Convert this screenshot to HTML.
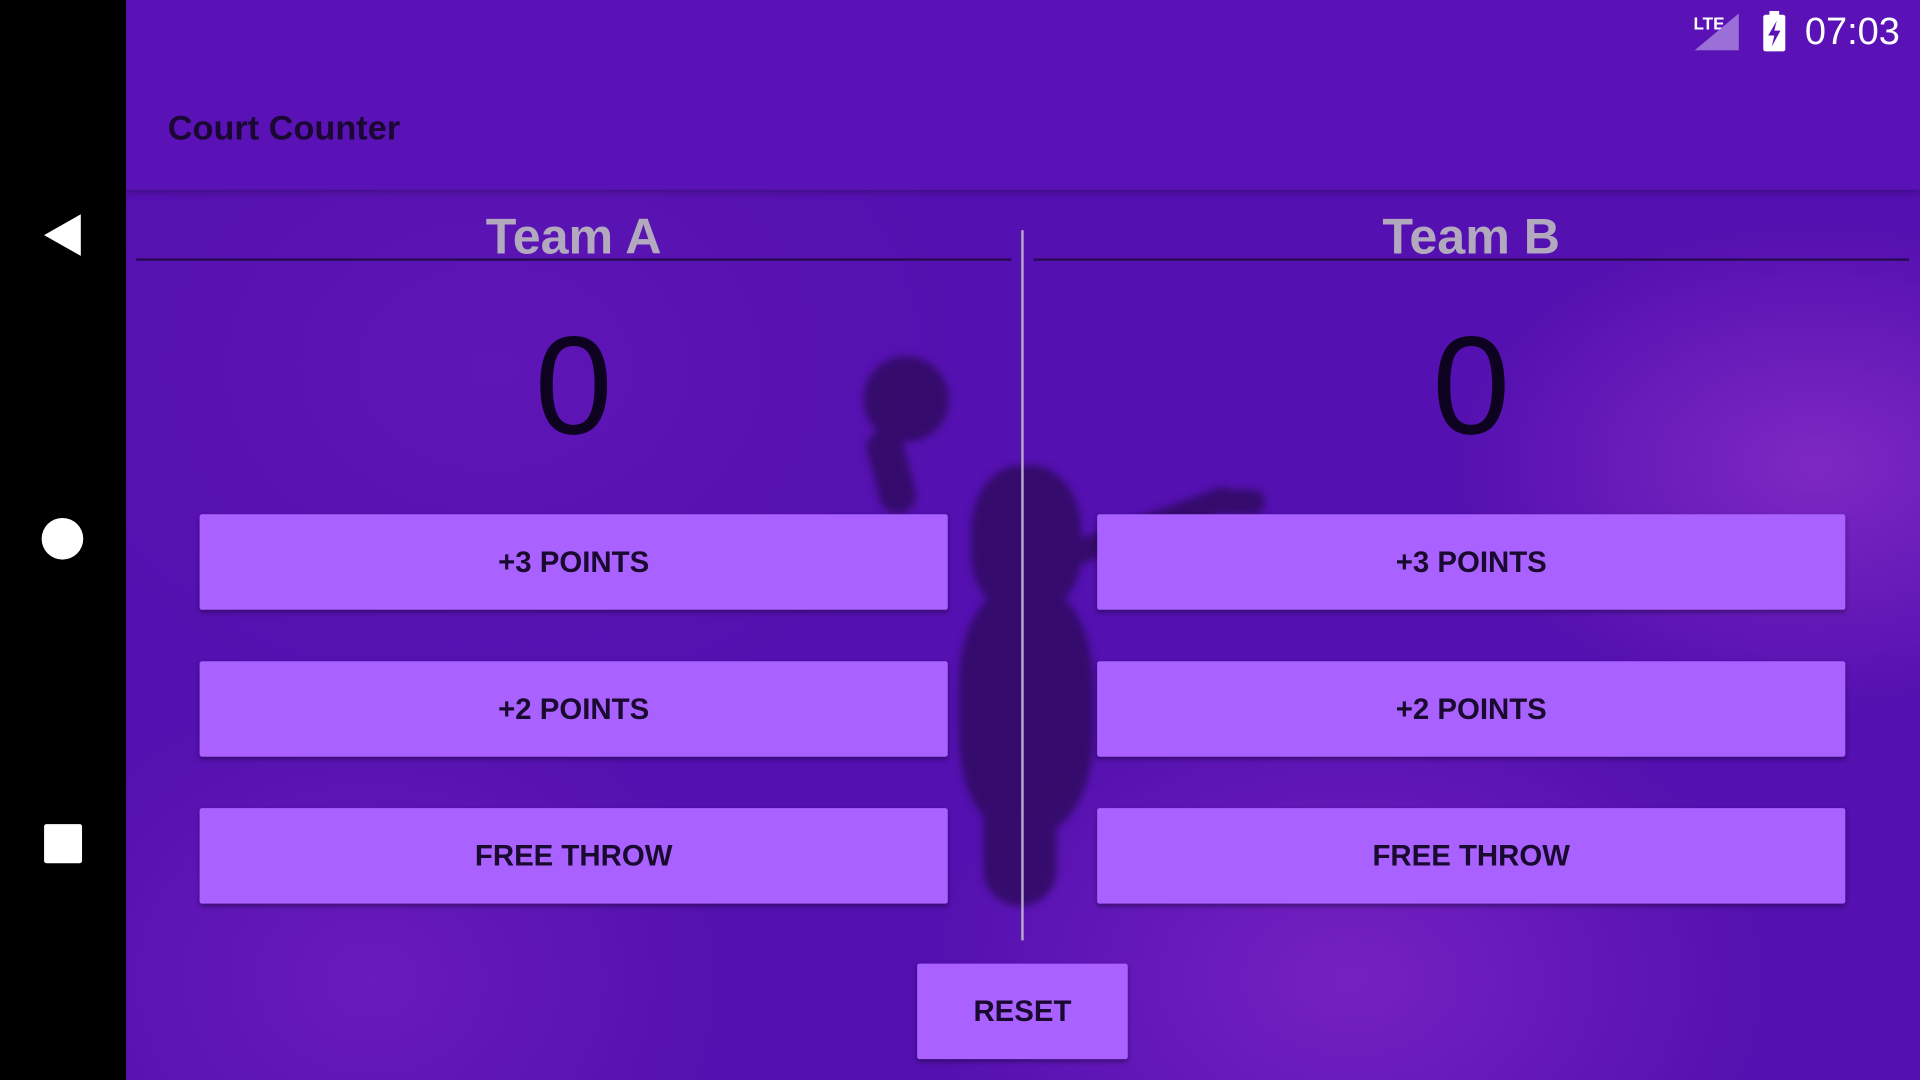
<!DOCTYPE html>
<html><head><meta charset="utf-8">
<style>
html,body{margin:0;padding:0;width:1920px;height:1080px;overflow:hidden;background:#000}
#s{position:absolute;left:0;top:0;width:1568px;height:882px;transform:scale(1.22449);transform-origin:0 0;font-family:"Liberation Sans",sans-serif;}
.nav{position:absolute;left:0;top:0;width:103px;height:882px;background:#000}
.main{position:absolute;left:103px;top:0;width:1465px;height:882px;overflow:hidden;
background:
radial-gradient(ellipse 300px 200px at 1380px 380px, rgba(160,60,210,0.55), transparent),
radial-gradient(ellipse 350px 250px at 1000px 800px, rgba(150,50,210,0.5), transparent),
radial-gradient(ellipse 300px 250px at 200px 800px, rgba(130,40,200,0.45), transparent),
radial-gradient(ellipse 400px 300px at 300px 300px, rgba(110,30,190,0.4), transparent),
#5410b0;}
.bar{position:absolute;left:0;top:0;width:1465px;height:155px;background:#5a12b6;box-shadow:0 2px 6px rgba(0,0,0,0.3)}
.title{position:absolute;left:34px;top:89px;font-size:28px;color:#1a0833;font-weight:bold}
.time{position:absolute;left:1371px;top:8px;font-size:31px;color:#fff}
.team{position:absolute;top:170px;width:715px;text-align:center;font-size:41px;font-weight:bold;color:#b3a9be}
.line{position:absolute;top:211px;height:2px;width:715px;background:#2a0a55}
.score{position:absolute;top:250px;width:715px;text-align:center;font-size:114px;color:#0d0320;font-weight:300}
.btn{position:absolute;width:611px;height:78px;background:#a962ff;color:#1a0a30;font-size:24px;font-weight:bold;text-align:center;line-height:80px;box-shadow:0 2px 4px rgba(0,0,0,0.35);border-radius:2px}
.silw{position:absolute;left:0;top:0;width:1465px;height:882px;filter:blur(3px);opacity:0.8}
.sil{position:absolute;background:#2d0a5c}
</style></head><body><div id="s">
<div class="nav">
<svg width="103" height="882" style="position:absolute;left:0;top:0">
<polygon points="36,192 66,175 66,209" fill="#fff"/>
<circle cx="51" cy="440" r="17" fill="#fff"/>
<rect x="36" y="673" width="31" height="32" rx="2" fill="#fff"/>
</svg></div>
<div class="main">
<div class="silw">
<div class="sil" style="left:602px;top:291px;width:70px;height:70px;border-radius:50%"></div>
<div class="sil" style="left:610px;top:350px;width:30px;height:70px;border-radius:15px;transform:rotate(-15deg)"></div>
<div class="sil" style="left:690px;top:380px;width:90px;height:120px;border-radius:45% 45% 40% 40%"></div>
<div class="sil" style="left:680px;top:480px;width:110px;height:200px;border-radius:40%"></div>
<div class="sil" style="left:700px;top:640px;width:60px;height:100px;border-radius:30px"></div>
<div class="sil" style="left:890px;top:400px;width:40px;height:20px;border-radius:10px"></div>
<div class="sil" style="left:760px;top:420px;width:150px;height:20px;border-radius:10px;transform:rotate(-20deg)"></div>
</div>
<div class="bar"></div>
<div class="title">Court Counter</div>
<svg style="position:absolute;left:1278px;top:8px" width="100" height="36">
<text x="2" y="16" font-size="14" font-weight="bold" fill="#fff" font-family="Liberation Sans">LTE</text>
<polygon points="3,33 39,33 39,3" fill="#9a70d8"/>
<rect x="59" y="4" width="18" height="30" rx="2" fill="#fff"/>
<rect x="64" y="1" width="8" height="4" fill="#fff"/>
<polygon points="70,9 63,21 68,21 66,30 73,17 68,17" fill="#5a12b6"/>
</svg>
<div class="time">07:03</div>
<div class="team" style="left:8px">Team A</div>
<div class="team" style="left:741px">Team B</div>
<div class="line" style="left:8px"></div>
<div class="line" style="left:741px"></div>
<div style="position:absolute;left:731px;top:188px;width:2px;height:580px;background:#b9a8cc"></div>
<div class="score" style="left:8px">0</div>
<div class="score" style="left:741px">0</div>
<div class="btn" style="left:60px;top:420px">+3 POINTS</div>
<div class="btn" style="left:60px;top:540px">+2 POINTS</div>
<div class="btn" style="left:60px;top:660px">FREE THROW</div>
<div class="btn" style="left:793px;top:420px">+3 POINTS</div>
<div class="btn" style="left:793px;top:540px">+2 POINTS</div>
<div class="btn" style="left:793px;top:660px">FREE THROW</div>
<div class="btn" style="left:646px;top:787px;width:172px">RESET</div>
</div>
</div></body></html>
